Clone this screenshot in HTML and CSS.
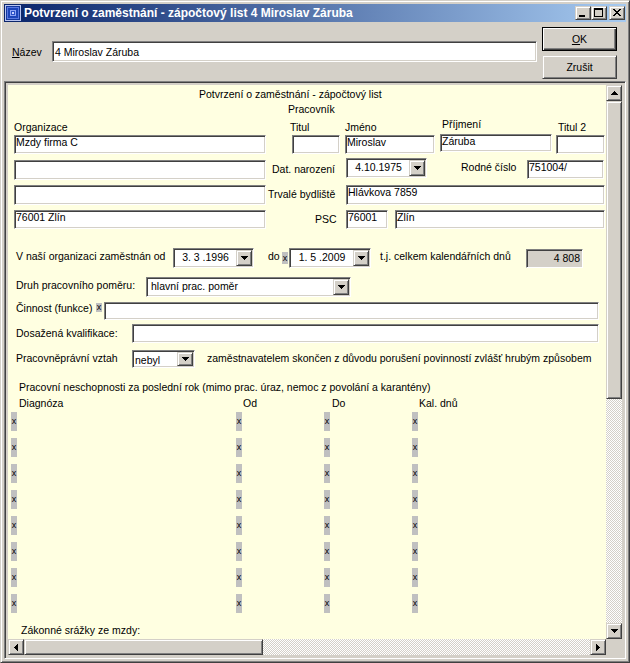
FILE: index.html
```html
<!DOCTYPE html>
<html lang="cs">
<head>
<meta charset="utf-8">
<title>Potvrzení o zaměstnání</title>
<link rel="stylesheet" href="styles.css">
</head>
<body>
<div class="window">
  <div class="titlebar">
    <svg class="app-icon" width="16" height="16" viewBox="0 0 16 16" shape-rendering="crispEdges">
      <rect x="0.5" y="0.5" width="15" height="15" fill="#14389c" stroke="#b8c4f0"/>
      <rect x="2.5" y="2.5" width="11" height="11" fill="#1c44b8" stroke="#5a78e0"/>
      <rect x="5.5" y="5.5" width="5" height="5" fill="#2a50c8" stroke="#8ea4f4"/>
      <rect x="7" y="7" width="2" height="2" fill="#c8d4ff"/>
    </svg>
    <span class="title-text">Potvrzení o zaměstnání - zápočtový list 4 Miroslav Záruba</span>
    <div class="caption-buttons">
      <div class="cap-btn raised">
        <svg width="14" height="12" viewBox="0 0 14 12" shape-rendering="crispEdges"><rect x="3" y="8" width="6" height="2"/></svg>
      </div>
      <div class="cap-btn raised">
        <svg width="14" height="12" viewBox="0 0 14 12" shape-rendering="crispEdges"><path d="M2 1h9v9H2z M3 3v6h7V3z" fill-rule="evenodd"/></svg>
      </div>
      <div class="cap-btn cap-close raised">
        <svg width="14" height="12" viewBox="0 0 14 12" shape-rendering="crispEdges"><path d="M3 2h2v1h1v1h2V3h1V2h2v1h-1v1h-1v1h-1v1h1v1h1v1h1v1H9V8H8V7H6v1H5v1H3V8h1V7h1V6h1V5H5V4H4V3H3z"/></svg>
      </div>
    </div>
  </div>

  <div class="client">
    <div class="top">
      <div class="name-group">
        <span class="name-label"><u>N</u>ázev</span>
        <div class="field sunken name-field">4 Miroslav Záruba</div>
      </div>
      <div class="btn-col">
        <div class="btn btn-default"><span><u>O</u>K</span></div>
        <div class="btn raised">Zrušit</div>
      </div>
    </div>

    <div class="panel">
      <div class="content">
        <div class="row head1">Potvrzení o zaměstnání - zápočtový list</div>
        <div class="row head2">Pracovník</div>

        <div class="row labels">
          <span class="lbl l-org">Organizace</span>
          <span class="lbl l-titul">Titul</span>
          <span class="lbl l-jmeno">Jméno</span>
          <span class="lbl l-prijmeni">Příjmení</span>
          <span class="lbl">Titul 2</span>
        </div>

        <div class="row r-inputs1">
          <div class="field sunken f-org">Mzdy firma C</div>
          <div class="field sunken f-titul"></div>
          <div class="field sunken f-jmeno">Miroslav</div>
          <div class="field sunken f-prijmeni">Záruba</div>
          <div class="field sunken f-titul2"></div>
        </div>

        <div class="row r-birth">
          <div class="field sunken f-org f-org2"></div>
          <span class="lbl l-narozeni">Dat. narození</span>
          <div class="combo sunken date d-birth">
            <span class="combo-text">4.10.1975</span>
            <span class="dd-btn raised"><svg width="7" height="4" viewBox="0 0 7 4" shape-rendering="crispEdges"><path d="M0 0h7v1h-1v1h-1v1h-1v1h-1v-1h-1v-1h-1v-1h-1z"/></svg></span>
          </div>
          <span class="lbl l-rodne">Rodné číslo</span>
          <div class="field sunken f-rodne">751004/</div>
        </div>

        <div class="row r-address">
          <div class="field sunken f-org f-h20"></div>
          <span class="lbl l-bydliste">Trvalé bydliště</span>
          <div class="field sunken f-street">Hlávkova 7859</div>
        </div>

        <div class="row r-city">
          <div class="field sunken f-org">76001 Zlín</div>
          <span class="lbl l-psc">PSC</span>
          <div class="field sunken f-psc">76001</div>
          <div class="field sunken f-city">Zlín</div>
        </div>

        <div class="row r-employed">
          <span class="lbl l-employed">V naší organizaci zaměstnán od</span>
          <div class="combo sunken date d-from">
            <span class="combo-text">3. 3 .1996</span>
            <span class="dd-btn raised"><svg width="7" height="4" viewBox="0 0 7 4" shape-rendering="crispEdges"><path d="M0 0h7v1h-1v1h-1v1h-1v1h-1v-1h-1v-1h-1v-1h-1z"/></svg></span>
          </div>
          <span class="lbl l-do">do</span>
          <span class="mark mark-do">x</span>
          <div class="combo sunken date d-to">
            <span class="combo-text">1. 5 .2009</span>
            <span class="dd-btn raised"><svg width="7" height="4" viewBox="0 0 7 4" shape-rendering="crispEdges"><path d="M0 0h7v1h-1v1h-1v1h-1v1h-1v-1h-1v-1h-1v-1h-1z"/></svg></span>
          </div>
          <span class="lbl l-total">t.j. celkem kalendářních dnů</span>
          <div class="field sunken f-total">4 808</div>
        </div>

        <div class="row r-kind">
          <span class="lbl l-kind">Druh pracovního poměru:</span>
          <div class="combo sunken c-kind">
            <span class="combo-text">hlavní prac. poměr</span>
            <span class="dd-btn raised"><svg width="7" height="4" viewBox="0 0 7 4" shape-rendering="crispEdges"><path d="M0 0h7v1h-1v1h-1v1h-1v1h-1v-1h-1v-1h-1v-1h-1z"/></svg></span>
          </div>
        </div>

        <div class="row r-activity">
          <span class="lbl l-activity">Činnost (funkce)</span>
          <span class="mark mark-activity">x</span>
          <div class="field sunken f-activity"></div>
        </div>

        <div class="row r-qual">
          <span class="lbl l-qual">Dosažená kvalifikace:</span>
          <div class="field sunken f-qual"></div>
        </div>

        <div class="row r-relation">
          <span class="lbl l-relation">Pracovněprávní vztah</span>
          <div class="combo sunken c-relation">
            <span class="combo-text">nebyl</span>
            <span class="dd-btn raised"><svg width="7" height="4" viewBox="0 0 7 4" shape-rendering="crispEdges"><path d="M0 0h7v1h-1v1h-1v1h-1v1h-1v-1h-1v-1h-1v-1h-1z"/></svg></span>
          </div>
          <span class="lbl l-reason">zaměstnavatelem skončen z důvodu porušení povinností zvlášť hrubým způsobem</span>
        </div>

        <div class="row lbl r-sick">Pracovní neschopnosti za poslední rok (mimo prac. úraz, nemoc z povolání a karantény)</div>

        <div class="row r-cols">
          <span class="lbl l-diag">Diagnóza</span>
          <span class="lbl l-od">Od</span>
          <span class="lbl l-docol">Do</span>
          <span class="lbl">Kal. dnů</span>
        </div>

        <div class="diag-list">
          <div class="row diag-row"><span class="mark m1">x</span><span class="mark m2">x</span><span class="mark m3">x</span><span class="mark m3">x</span></div>
          <div class="row diag-row"><span class="mark m1">x</span><span class="mark m2">x</span><span class="mark m3">x</span><span class="mark m3">x</span></div>
          <div class="row diag-row"><span class="mark m1">x</span><span class="mark m2">x</span><span class="mark m3">x</span><span class="mark m3">x</span></div>
          <div class="row diag-row"><span class="mark m1">x</span><span class="mark m2">x</span><span class="mark m3">x</span><span class="mark m3">x</span></div>
          <div class="row diag-row"><span class="mark m1">x</span><span class="mark m2">x</span><span class="mark m3">x</span><span class="mark m3">x</span></div>
          <div class="row diag-row"><span class="mark m1">x</span><span class="mark m2">x</span><span class="mark m3">x</span><span class="mark m3">x</span></div>
          <div class="row diag-row"><span class="mark m1">x</span><span class="mark m2">x</span><span class="mark m3">x</span><span class="mark m3">x</span></div>
          <div class="row diag-row"><span class="mark m1">x</span><span class="mark m2">x</span><span class="mark m3">x</span><span class="mark m3">x</span></div>
        </div>

        <div class="row lbl r-deductions">Zákonné srážky ze mzdy:</div>
      </div>

      <div class="vscroll">
        <div class="sb-btn raised"><svg width="7" height="4" viewBox="0 0 7 4" shape-rendering="crispEdges"><path d="M3 0h1v1h1v1h1v1h1v1H0V3h1V2h1V1h1z"/></svg></div>
        <div class="v-thumb raised"></div>
        <div class="track"></div>
        <div class="sb-btn raised"><svg width="7" height="4" viewBox="0 0 7 4" shape-rendering="crispEdges"><path d="M0 0h7v1h-1v1h-1v1h-1v1h-1v-1h-1v-1h-1v-1h-1z"/></svg></div>
      </div>

      <div class="hscroll">
        <div class="sb-btn raised"><svg width="4" height="7" viewBox="0 0 4 7" shape-rendering="crispEdges"><path d="M3 0h1v7h-1v-1h-1v-1h-1v-1h-1v-1h1v-1h1v-1h1z"/></svg></div>
        <div class="h-thumb raised"></div>
        <div class="track"></div>
        <div class="sb-btn raised"><svg width="4" height="7" viewBox="0 0 4 7" shape-rendering="crispEdges"><path d="M0 0h1v1h1v1h1v1h1v1h-1v1h-1v1h-1v1h-1z"/></svg></div>
      </div>

      <div class="corner"></div>
    </div>
  </div>
</div>
</body>
</html>
```

FILE: styles.css
```css
* { box-sizing: border-box; }

html, body {
  margin: 0;
  padding: 0;
  background: #d4d0c8;
}

body {
  font-family: "Liberation Sans", Arial, sans-serif;
  font-size: 10.5px;
  color: #000;
}

svg { display: block; }

/* ---------- bevels ---------- */
.raised {
  background: #d4d0c8;
  border: 1px solid;
  border-color: #d4d0c8 #404040 #404040 #d4d0c8;
  box-shadow: inset 1px 1px #fff, inset -1px -1px #808080;
}

.sunken {
  background: #fff;
  border: 1px solid;
  border-color: #808080 #fff #fff #808080;
  box-shadow: inset 1px 1px #404040, inset -1px -1px #d4d0c8;
}

/* ---------- window ---------- */
.window {
  width: 630px;
  height: 663px;
  background: #d4d0c8;
  border: 1px solid;
  border-color: #d4d0c8 #404040 #404040 #d4d0c8;
  box-shadow: inset 1px 1px #fff, inset -1px -1px #808080;
  padding: 3px;
  display: flex;
  flex-direction: column;
}

.titlebar {
  flex: none;
  height: 18px;
  display: flex;
  align-items: center;
  background: linear-gradient(to right, #0a246a, #a6caf0);
}

.app-icon { margin-left: 1px; flex: none; }

.title-text {
  margin-left: 3px;
  color: #fff;
  font-size: 12px;
  font-weight: bold;
  white-space: nowrap;
  line-height: 14px;
}

.caption-buttons {
  margin-left: auto;
  margin-right: 1px;
  display: flex;
}

.cap-btn {
  width: 16px;
  height: 14px;
  flex: none;
}

.cap-close { margin-left: 2px; }

/* ---------- client ---------- */
.client {
  flex: 1;
  display: flex;
  flex-direction: column;
  min-height: 0;
}

.top {
  flex: none;
  height: 59px;
  padding: 5px 9px 0 8px;
  display: flex;
  align-items: flex-start;
}

.name-group {
  display: flex;
  align-items: flex-start;
  margin-top: 14px;
  height: 21px;
}

.name-label {
  width: 40px;
  padding-top: 5px;
  line-height: 13px;
}

.name-label u, .btn u { text-underline-offset: 1px; }

.field {
  flex: none;
  height: 19px;
  padding: 0 1px;
  line-height: 13px;
  white-space: nowrap;
  overflow: hidden;
}

.name-field {
  width: 485px;
  height: 21px;
  padding: 4px 2px 0;
}

.btn-col {
  margin-left: 5px;
  width: 75px;
  display: flex;
  flex-direction: column;
  gap: 4px;
}

.btn {
  height: 24px;
  display: flex;
  align-items: center;
  justify-content: center;
  line-height: 13px;
}

.btn-default {
  background: #d4d0c8;
  border: 1px solid #000;
  box-shadow: inset 1px 1px #fff, inset -1px -1px #404040, inset -2px -2px #808080;
}

/* ---------- panel / scroll box ---------- */
.panel {
  flex: 1;
  min-height: 0;
  border: 1px solid;
  border-color: #808080 #fff #fff #808080;
  box-shadow: inset 1px 1px #404040, inset -1px -1px #d4d0c8;
  padding: 3px;
  display: grid;
  grid-template-columns: 1fr 16px;
  grid-template-rows: 1fr 16px;
}

.content {
  background: #ffffe1;
  overflow: hidden;
  min-width: 0;
  min-height: 0;
  display: flex;
  flex-direction: column;
}

.vscroll {
  display: flex;
  flex-direction: column;
  min-height: 0;
}

.hscroll {
  display: flex;
  min-width: 0;
}

.sb-btn {
  flex: none;
  width: 16px;
  height: 16px;
  display: flex;
  align-items: center;
  justify-content: center;
}

.v-thumb { flex: none; height: 298px; }
.h-thumb { flex: none; width: 239px; }

.track {
  flex: 1;
  background-color: #fff;
  background-image: repeating-conic-gradient(#d4d0c8 0 25%, #fff 0 50%);
  background-size: 2px 2px;
}

.corner { background: #d4d0c8; }

/* ---------- form rows ---------- */
.row {
  display: flex;
  align-items: flex-start;
  flex: none;
}

.lbl {
  flex: none;
  line-height: 13px;
  white-space: nowrap;
}

.head1 { margin-top: 3px; padding-left: 191px; line-height: 13px; }
.head2 { margin-top: 2px; padding-left: 280px; line-height: 13px; }

.labels { margin-top: 5px; height: 13px; }
.l-org { margin-left: 6px; width: 276px; }
.l-titul { width: 55px; }
.l-jmeno { width: 97px; }
.l-prijmeni { width: 116px; margin-top: -3px; }

.r-inputs1 { margin-top: 1px; height: 19px; }
.f-org { margin-left: 6px; width: 252px; }
.f-titul { margin-left: 26px; width: 48px; }
.f-jmeno { margin-left: 5px; width: 90px; }
.f-prijmeni { margin-left: 5px; width: 112px; height: 18px; margin-top: -1px; }
.f-titul2 { margin-left: 4px; width: 49px; }

.r-birth { margin-top: 4px; height: 22px; }
.f-org2 { height: 20px; margin-top: 2px; }
.l-narozeni { width: 80px; padding-left: 6px; margin-top: 5px; }
.d-birth { width: 81px; height: 20px; }
.l-rodne { width: 100px; padding-left: 34px; margin-top: 3px; }
.f-rodne { width: 77px; margin-top: 2px; }

.r-address { margin-top: 5px; height: 20px; }
.f-h20 { height: 20px; }
.l-bydliste { width: 80px; padding-left: 2px; margin-top: 3px; }
.f-street { width: 259px; height: 20px; }

.r-city { margin-top: 5px; height: 19px; }
.l-psc { width: 80px; padding-left: 49px; margin-top: 3px; }
.f-psc { width: 42px; }
.f-city { margin-left: 7px; width: 210px; }

/* combos / date pickers */
.combo {
  flex: none;
  display: flex;
  padding: 1px;
}

.combo-text {
  flex: 1;
  min-width: 0;
  line-height: 13px;
  padding: 1px 0 0 3px;
  white-space: nowrap;
  overflow: hidden;
}

.date .combo-text { text-align: center; padding-left: 0; }

.dd-btn {
  flex: none;
  width: 16px;
  height: 100%;
  display: flex;
  align-items: center;
  justify-content: center;
}

.r-employed { margin-top: 19px; height: 20px; }
.l-employed { margin-left: 8px; width: 157px; margin-top: 2px; }
.d-from { width: 81px; height: 20px; }
.l-do { width: 28px; padding-left: 14px; margin-top: 2px; }
.d-to { margin-left: 1px; width: 82px; height: 20px; }
.l-total { width: 155px; padding-left: 9px; margin-top: 2px; }
.f-total {
  width: 57px;
  margin-top: 1px;
  background: #d4d0c8;
  text-align: right;
  padding: 2px 2px 0 0;
}

.r-kind { margin-top: 9px; height: 20px; }
.l-kind { margin-left: 8px; width: 130px; margin-top: 2px; }
.c-kind { width: 205px; height: 20px; }

.r-activity { margin-top: 5px; height: 18px; }
.l-activity { margin-left: 8px; width: 80px; }
.f-activity { margin-left: 2px; width: 495px; height: 18px; }

.r-qual { margin-top: 4px; height: 19px; }
.l-qual { margin-left: 8px; width: 116px; margin-top: 3px; }
.f-qual { width: 467px; }

.r-relation { margin-top: 7px; height: 18px; }
.l-relation { margin-left: 8px; width: 116px; margin-top: 2px; }
.c-relation { width: 63px; height: 18px; }
.c-relation .combo-text { padding-left: 1px; padding-top: 2px; }
.l-reason { margin-left: 12px; margin-top: 2px; }

.r-sick { margin-top: 13px; padding-left: 11px; }

.r-cols { margin-top: 3px; height: 13px; }
.l-diag { margin-left: 11px; width: 224px; }
.l-od { width: 89px; }
.l-docol { width: 87px; }

/* "x" markers */
.mark {
  flex: none;
  width: 6px;
  height: 19px;
  background: #c0c0c0;
  font-size: 9px;
  line-height: 1;
  display: flex;
  align-items: center;
  justify-content: center;
}

.mark-do { height: 12px; margin-top: 4px; }
.mark-activity { height: 9px; margin-top: 1px; }

.diag-list {
  margin-top: 2px;
  display: flex;
  flex-direction: column;
  gap: 7px;
  flex: none;
}

.diag-row { height: 19px; }
.m1 { margin-left: 3px; }
.m2 { margin-left: 219px; }
.m3 { margin-left: 82px; }

.r-deductions { margin-top: 11px; padding-left: 13px; }
```
